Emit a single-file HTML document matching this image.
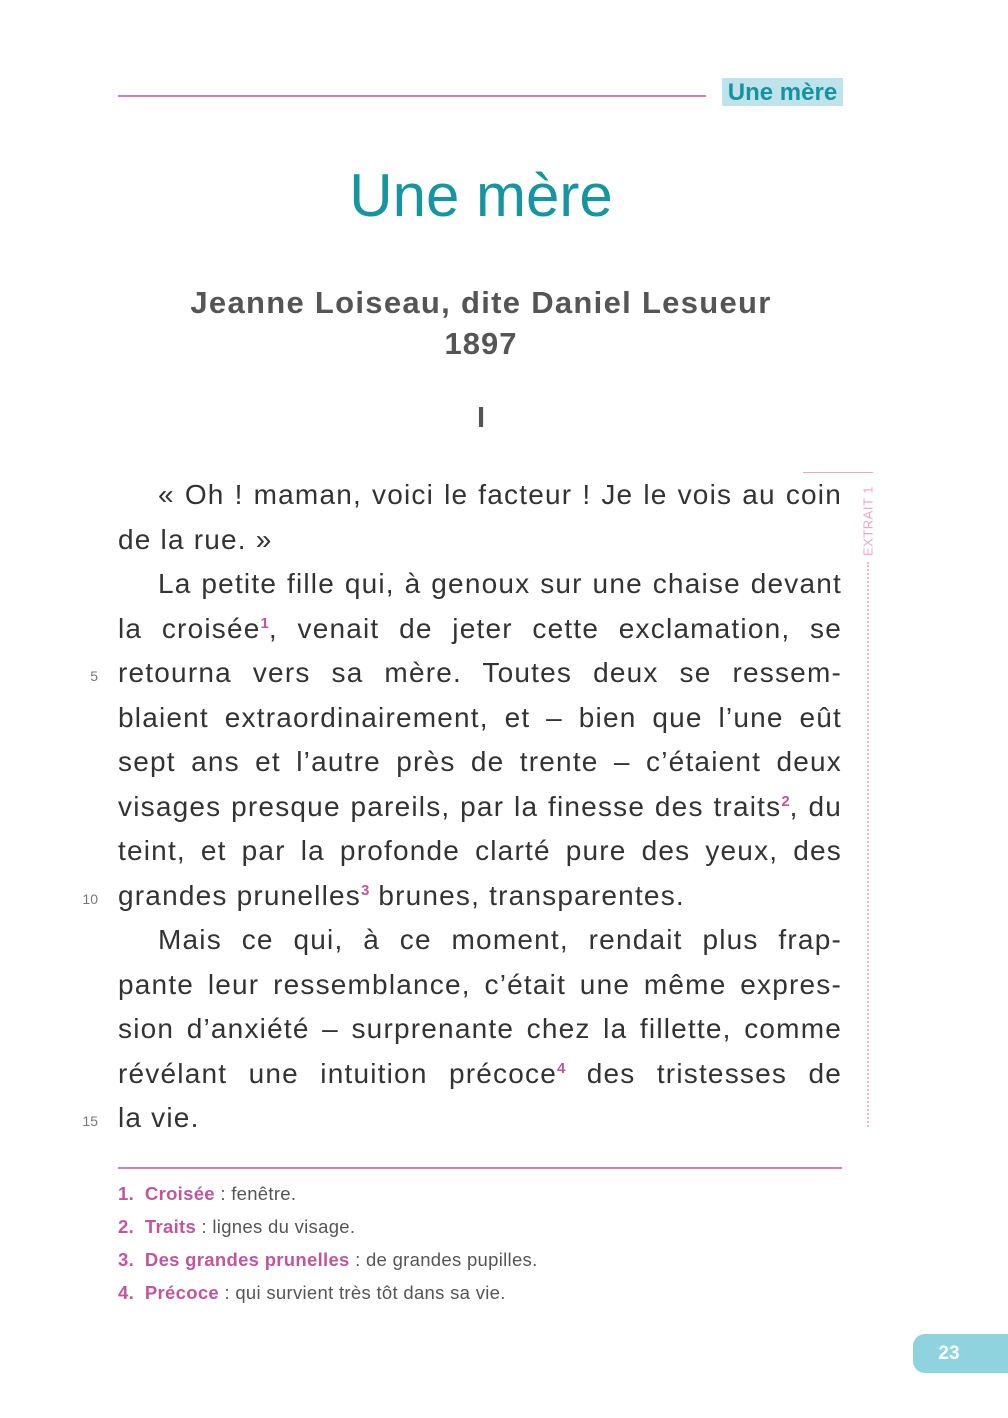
<!DOCTYPE html>
<html><head><meta charset="utf-8"><style>
body{margin:0;background:#fff;}
.pg{position:relative;width:1008px;height:1418px;overflow:hidden;font-family:"Liberation Sans",sans-serif;color:#333;}
.abs{position:absolute;}
.ln{position:absolute;left:118px;width:724px;height:44.5px;line-height:44.5px;font-size:28px;letter-spacing:1.2px;white-space:nowrap;text-align:justify;text-align-last:justify;}
.ln.l{text-align-last:left;}
.ind{text-indent:40px;}
sup{color:#c0579e;font-weight:bold;font-size:15px;vertical-align:10px;line-height:0;letter-spacing:0;}
.num{position:absolute;left:70px;width:28px;text-align:right;font-size:14px;color:#777;}
.fn{position:absolute;left:118px;font-size:18.5px;color:#555;letter-spacing:0.3px;}
.fn b{color:#c0579e;}
</style></head><body><div class="pg">
<div class="abs" style="left:118px;top:95px;width:588px;height:1.5px;background:#d07fc0"></div>
<div class="abs" style="left:722px;top:78px;width:121px;height:28px;background:#bfe3ea;color:#15939f;font-weight:bold;font-size:24px;line-height:29px;text-align:center">Une mère</div>
<div class="abs" style="left:0;width:962px;top:160px;text-align:center;font-size:60px;color:#16949f;line-height:72px">Une mère</div>
<div class="abs" style="left:0;width:962px;top:284px;text-align:center;font-size:31px;font-weight:bold;color:#555;line-height:38px;letter-spacing:1.3px">Jeanne Loiseau, dite Daniel Lesueur</div>
<div class="abs" style="left:0;width:962px;top:325px;text-align:center;font-size:31px;font-weight:bold;color:#555;line-height:38px;letter-spacing:1px">1897</div>
<div class="abs" style="left:0;width:962px;top:399px;text-align:center;font-size:29px;font-weight:bold;color:#555;line-height:38px">I</div>

<div class="abs" style="left:803px;top:472px;width:70px;height:1px;background:#e9a9c4"></div>
<div class="abs" style="left:858px;top:485px;width:20px;height:72px;"><div style="position:absolute;left:10px;top:36px;transform:translate(-50%,-50%) rotate(-90deg);font-size:13px;color:#e9a9c4;white-space:nowrap;letter-spacing:0.5px">EXTRAIT 1</div></div>
<div class="abs" style="left:867px;top:562px;height:565px;border-left:2px dotted #eab8cc"></div>

<div class="ln ind" style="top:473px">« Oh ! maman, voici le facteur ! Je le vois au coin</div>
<div class="ln l" style="top:517.5px">de la rue. »</div>
<div class="ln ind" style="top:562px">La petite fille qui, à genoux sur une chaise devant</div>
<div class="ln" style="top:606.5px">la croisée<sup>1</sup>, venait de jeter cette exclamation, se</div>
<div class="ln" style="top:651px">retourna vers sa mère. Toutes deux se ressem-</div>
<div class="ln" style="top:695.5px">blaient extraordinairement, et – bien que l’une eût</div>
<div class="ln" style="top:740px">sept ans et l’autre près de trente – c’étaient deux</div>
<div class="ln" style="top:784.5px">visages presque pareils, par la finesse des traits<sup>2</sup>, du</div>
<div class="ln" style="top:829px">teint, et par la profonde clarté pure des yeux, des</div>
<div class="ln l" style="top:873.5px">grandes prunelles<sup>3</sup> brunes, transparentes.</div>
<div class="ln ind" style="top:918px">Mais ce qui, à ce moment, rendait plus frap-</div>
<div class="ln" style="top:962.5px">pante leur ressemblance, c’était une même expres-</div>
<div class="ln" style="top:1007px">sion d’anxiété – surprenante chez la fillette, comme</div>
<div class="ln" style="top:1051.5px">révélant une intuition précoce<sup>4</sup> des tristesses de</div>
<div class="ln l" style="top:1096px">la vie.</div>

<div class="num" style="top:668px">5</div>
<div class="num" style="top:891px">10</div>
<div class="num" style="top:1113px">15</div>

<div class="abs" style="left:118px;top:1167px;width:724px;height:1.5px;background:#d07fc0"></div>
<div class="fn" style="top:1183px"><b>1.&nbsp; Croisée</b> : fenêtre.</div>
<div class="fn" style="top:1216px"><b>2.&nbsp; Traits</b> : lignes du visage.</div>
<div class="fn" style="top:1249px"><b>3.&nbsp; Des grandes prunelles</b> : de grandes pupilles.</div>
<div class="fn" style="top:1282px"><b>4.&nbsp; Précoce</b> : qui survient très tôt dans sa vie.</div>

<div class="abs" style="left:913px;top:1334px;width:110px;height:39px;background:#8fd3df;border-radius:12px 0 0 12px"></div>
<div class="abs" style="left:913px;top:1334px;width:72px;height:39px;line-height:39px;text-align:center;color:#fff;font-weight:bold;font-size:19px">23</div>
</div></body></html>
